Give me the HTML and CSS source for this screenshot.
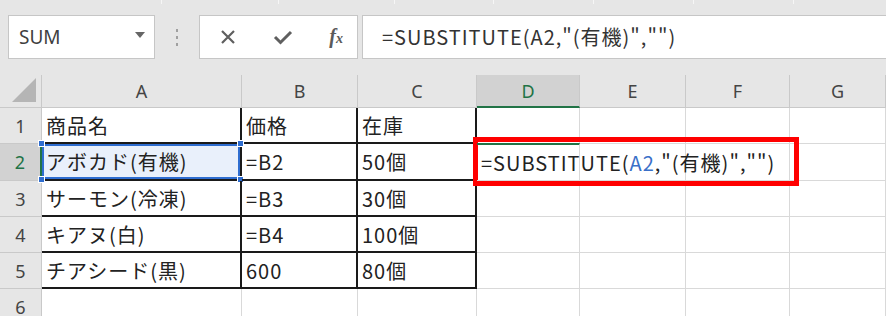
FILE: index.html
```html
<!DOCTYPE html>
<html lang="ja">
<head>
<meta charset="utf-8">
<link rel="stylesheet" href="styles.css">
</head>
<body>
<div class="app">
  <div class="ribbon-edge">
    <span class="seg s1"></span><span class="seg s2"></span><span class="seg s3"></span><span class="seg s4"></span><span class="seg s5"></span><span class="seg s6"></span><span class="seg s7"></span>
  </div>
  <div class="fbar">
    <div class="namebox">
      <span class="name">SUM</span>
      <svg class="caret" width="10" height="6" viewBox="0 0 10 6"><path d="M0 0 L10 0 L5 6 Z" fill="#666"/></svg>
    </div>
    <div class="grip"><i></i><i></i><i></i></div>
    <div class="btns">
      <svg width="18" height="18" viewBox="0 0 18 18"><path d="M3 3 L15 15 M15 3 L3 15" stroke="#5f5f5f" stroke-width="2.2" fill="none"/></svg>
      <svg width="20" height="18" viewBox="0 0 20 18"><path d="M2 9 L7.5 14.5 L18 4" stroke="#5f5f5f" stroke-width="3" fill="none" stroke-linejoin="miter"/></svg>
      <span class="fx"><span class="f">f</span><span class="x">x</span></span>
    </div>
    <div class="finput">=SUBSTITUTE(A2,"(有機)","")</div>
  </div>
  <div class="sheet">
    <div class="hd corner"><span class="tri"></span></div>
    <div class="hd col">A</div>
    <div class="hd col">B</div>
    <div class="hd col">C</div>
    <div class="hd col sel">D</div>
    <div class="hd col">E</div>
    <div class="hd col">F</div>
    <div class="hd col">G</div>

    <div class="hd row">1</div>
    <div class="c t">商品名</div>
    <div class="c t">価格</div>
    <div class="c t tr">在庫</div>
    <div class="c"></div><div class="c"></div><div class="c"></div><div class="c"></div>

    <div class="hd row rsel">2</div>
    <div class="c t asel">アボカド(有機)
      <span class="h h1"></span><span class="h h2"></span><span class="h h3"></span><span class="h h4"></span>
    </div>
    <div class="c t">=B2</div>
    <div class="c t tr">50個</div>
    <div class="c dact"><span class="ftext">=SUBSTITUTE(<span class="ref">A2</span>,"(有機)","")</span></div>
    <div class="c"></div><div class="c"></div><div class="c"></div>

    <div class="hd row">3</div>
    <div class="c t">サーモン(冷凍)</div>
    <div class="c t">=B3</div>
    <div class="c t tr">30個</div>
    <div class="c"></div><div class="c"></div><div class="c"></div><div class="c"></div>

    <div class="hd row">4</div>
    <div class="c t">キアヌ(白)</div>
    <div class="c t">=B4</div>
    <div class="c t tr">100個</div>
    <div class="c"></div><div class="c"></div><div class="c"></div><div class="c"></div>

    <div class="hd row">5</div>
    <div class="c t">チアシード(黒)</div>
    <div class="c t">600</div>
    <div class="c t tr">80個</div>
    <div class="c"></div><div class="c"></div><div class="c"></div><div class="c"></div>

    <div class="hd row">6</div>
    <div class="c"></div><div class="c"></div><div class="c"></div><div class="c"></div><div class="c"></div><div class="c"></div><div class="c"></div>

    <div class="redbox"></div>
  </div>
</div>
</body>
</html>
```

FILE: styles.css
```css
* { box-sizing: border-box; }
html, body { margin: 0; padding: 0; }
body {
  width: 886px; height: 316px; overflow: hidden;
  background: #e6e6e6;
  font-family: "Noto Sans CJK JP", "Noto Sans", sans-serif;
}
.app { width: 886px; height: 316px; overflow: hidden; }

.ribbon-edge { height: 4px; display: flex; }
.seg { display: block; height: 4px; border-right: 1px solid #f6f6f6; }
.s1 { width: 162px; } .s2 { width: 117px; } .s3 { width: 116px; } .s4 { width: 99px; }
.s5 { width: 100px; } .s6 { width: 100px; } .s7 { width: 100px; }

.fbar {
  display: flex; align-items: stretch;
  height: 71px; padding: 11px 0 16px 8px;
}
.namebox {
  width: 147px; height: 44px;
  background: #fff; border: 1px solid #c6c6c6;
  display: flex; align-items: center; justify-content: space-between;
  padding: 0 9px 0 10px;
}
.name { font-family: "Noto Sans", sans-serif; font-size: 19px; color: #404040; }
.caret { margin-top: -4px; }
.grip {
  width: 44px; display: flex; flex-direction: column; align-items: center; justify-content: center; gap: 4px;
}
.grip i { width: 2px; height: 3px; background: #a0a0a0; display: block; }
.btns {
  width: 159px; height: 44px; background: #fff; border: 1px solid #c6c6c6;
  display: flex; align-items: center; justify-content: space-between;
  padding: 0 14px 0 19px;
}
.fx {
  display: flex; align-items: baseline;
  font-family: "Liberation Serif", serif; font-style: italic; font-weight: bold; color: #5a5a5a;
  margin-top: -2px;
}
.fx .f { font-size: 20px; }
.fx .x { font-size: 14px; margin-left: 0; }
.finput {
  flex: 1; height: 44px; margin-left: 4px; background: #fff; border: 1px solid #c6c6c6; border-right: none;
  font-size: 20px; letter-spacing: 1px; color: #333; line-height: 42px; padding-left: 19px; white-space: nowrap;
}

.sheet {
  position: relative;
  display: grid;
  grid-template-columns: 42px 200px 116px 119px 103px 106px 104px 96px;
  grid-template-rows: 33px 36px 37px 36px 36px 36px 36px;
  background: #fff;
}
.hd {
  background: #e6e6e6; color: #444;
  font-family: "Noto Sans", sans-serif; font-size: 18px;
  display: flex; align-items: center; justify-content: center;
  border-right: 1px solid #c9c9c9; border-bottom: 1px solid #c9c9c9;
}
.corner { position: relative; }
.tri {
  position: absolute; right: 5px; bottom: 5px; width: 0; height: 0;
  border-left: 24px solid transparent; border-bottom: 24px solid #b5b5b5;
}
.col.sel { background: #d2d2d2; color: #217346; border-bottom: 2px solid #217346; }
.row.rsel { background: #d2d2d2; color: #217346; border-right: 2px solid #217346; }

.c {
  position: relative;
  border-right: 1px solid #d9d9d9; border-bottom: 1px solid #d9d9d9;
  font-size: 20px; letter-spacing: 1px; color: #222; white-space: nowrap;
  display: flex; align-items: center; padding-left: 4px;
}
.c.t { border-right: 2px solid #1a1a1a; border-bottom: 2px solid #1a1a1a; }
.c.asel {
  background: #e9f0fb;
  box-shadow: inset 0 0 0 2px #2e6dd0;
}
.h { position: absolute; width: 7px; height: 7px; background: #2e6dd0; border: 1px solid #fff; }
.h1 { left: -4px; top: -4px; }
.h2 { right: -4px; top: -4px; }
.h3 { left: -4px; bottom: -4px; }
.h4 { right: -4px; bottom: -4px; }

.dact { border-top: 2px solid #217346; margin-top: -1px; overflow: visible; z-index: 2; }
.ftext { color: #222; }
.ref { color: #3a6fc8; }

.redbox {
  position: absolute; left: 473px; top: 62px; width: 326px; height: 49px;
  border: 5px solid #ff0000; pointer-events: none;
}
```
